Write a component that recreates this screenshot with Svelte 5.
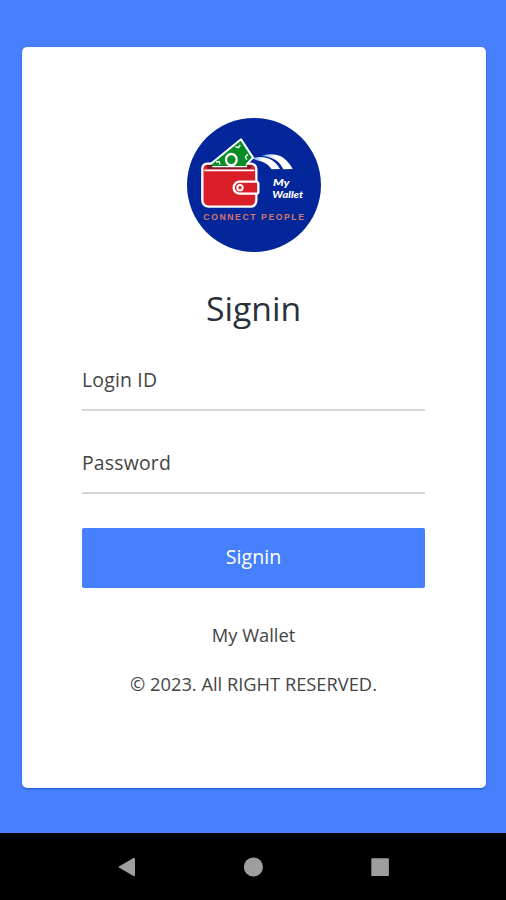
<script>
    let loginId = $state('');
    let password = $state('');

    const year = 2023;
</script>

<div class="screen">
    <main>
        <form class="card" onsubmit={(e) => e.preventDefault()}>
            <svg class="logo" viewBox="20 24 402 402" role="img" aria-label="My Wallet, connect people">
                <defs>
                    <linearGradient id="swoosh" x1="0" x2="1">
                        <stop offset="0" stop-color="#4f9fee" />
                        <stop offset="0.4" stop-color="#fff" />
                        <stop offset="1" stop-color="#fff" />
                    </linearGradient>
                </defs>
                <circle cx="221" cy="225" r="201" fill="#03279a" />

                <!-- swoosh -->
                <path d="M213 145 Q241 136 267 146 Q287 155 299 177 L274 178 Q262 159 238 153 Q226 149 213 145 Z" fill="url(#swoosh)" />
                <path d="M244 137 Q275 128 300 138 Q322 149 337 177 L309 178 Q298 153 275 145 Q260 139 244 137 Z" fill="url(#swoosh)" />

                <!-- wallet -->
                <path d="M80 161 H212 Q228 163 228 179 V272 Q226 290 209 290 H84 Q66 288 66 270 V174 Q68 162 80 161 Z" fill="#d91e28" stroke="#fff" stroke-width="7" stroke-linejoin="round" />
                <path d="M82 165 H209 Q215 170 209 176 H82 Q76 170 82 165 Z" fill="#711b26" />
                <path d="M72 181 H222" stroke="#fff" stroke-width="5" />

                <!-- banknote -->
                <path d="M90 163 L182 88 L218 143 L196 166" fill="#078b24" stroke="#fff" stroke-width="6" stroke-linejoin="round" />
                <path d="M92 163 H200 L194 168 H98 Z" fill="#078b24" />
                <path d="M107 156 L117 155 L119 163 M165 110 L174 113 L180 105 M203 133 L195 140 L199 149" fill="none" stroke="#fff" stroke-width="4" />
                <ellipse cx="153" cy="149" rx="16" ry="17" fill="#078b24" stroke="#fff" stroke-width="7" />
                <path d="M96 170 H200" stroke="#fff" stroke-width="4" />

                <!-- clasp -->
                <path d="M178 215 H227 Q234 215 234 222 V245 Q234 251 227 251 H178 A18 18 0 0 1 178 215 Z" fill="#d91e28" stroke="#fff" stroke-width="7" />
                <circle cx="179" cy="233" r="8" fill="#d91e28" stroke="#fff" stroke-width="6" />

                <text class="brand" x="278" y="228" textLength="50" lengthAdjust="spacingAndGlyphs">My</text>
                <text class="brand" x="276" y="265" textLength="92" lengthAdjust="spacingAndGlyphs">Wallet</text>
                <text class="slogan" x="69" y="329" textLength="302">CONNECT PEOPLE</text>
            </svg>

            <h1>Signin</h1>

            <input type="text" placeholder="Login ID" aria-label="Login ID" bind:value={loginId} />
            <input type="password" placeholder="Password" aria-label="Password" bind:value={password} />

            <button type="submit">Signin</button>

            <p class="app-name">My Wallet</p>
            <p class="copyright">© {year}. All RIGHT RESERVED.</p>
        </form>
    </main>

    <nav>
        <svg viewBox="0 0 20 20" aria-label="Back"><path d="M2 10 L17.5 1 Q19 .5 19 2 V18 Q19 19.5 17.5 19 Z" /></svg>
        <svg viewBox="0 0 20 20" aria-label="Home"><circle cx="10.4" cy="10" r="9.6" /></svg>
        <svg viewBox="0 0 20 20" aria-label="Recents"><rect x="1.3" y="1.3" width="17.6" height="17.6" rx="0.5" /></svg>
    </nav>
</div>

<style>
    :global(body) {
        margin: 0;
        background: #4680ff;
    }

    .screen {
        display: flex;
        flex-direction: column;
        height: 900px;
        font-family: "Open Sans", sans-serif;
        background: #4680ff;
        overflow: hidden;
    }

    main {
        flex: 1;
        padding: 47px 20px 45px 22px;
    }

    .card {
        display: flex;
        flex-direction: column;
        align-items: center;
        box-sizing: border-box;
        height: 741px;
        padding: 71px 61px 0 60px;
        background: #fff;
        border-radius: 5px;
        box-shadow: 0 1px 2px rgba(0, 70, 180, 0.7);
    }

    .logo {
        display: block;
        flex: none;
        width: 134px;
        height: 134px;
    }

    .brand {
        font-family: Lato, sans-serif;
        font-size: 29px;
        font-weight: 900;
        font-style: italic;
        fill: #fff;
    }

    .slogan {
        font-family: "Liberation Sans", sans-serif;
        font-size: 26px;
        font-weight: bold;
        fill: #d97568;
    }

    h1 {
        margin: 33px 0 0;
        font-size: 33.7px;
        font-weight: 400;
        line-height: 46px;
        color: #28313b;
    }

    input {
        box-sizing: border-box;
        width: 100%;
        height: 51px;
        margin: 0 0 32px;
        padding: 0 0 10px;
        font-family: inherit;
        font-size: 19.4px;
        letter-spacing: 0.2px;
        color: #333;
        background: none;
        border: 0;
        border-bottom: 2px solid #d6d6d6;
        border-radius: 0;
        outline: none;
    }

    h1 + input {
        margin-top: 29px;
    }

    input::placeholder {
        color: #444;
        opacity: 1;
    }

    button {
        width: 100%;
        height: 60px;
        margin: 2px 0 0;
        padding: 0 0 3px;
        font-family: inherit;
        font-size: 19.6px;
        color: #fff;
        background: #4680ff;
        border: 0;
        border-radius: 2px;
    }

    p {
        margin: 0;
        font-size: 18.3px;
        line-height: 26px;
        color: #444;
        white-space: nowrap;
    }

    .app-name {
        margin-top: 34px;
    }

    .copyright {
        margin-top: 23px;
    }

    nav {
        display: flex;
        flex: none;
        justify-content: center;
        gap: 107px;
        box-sizing: border-box;
        height: 67px;
        padding-top: 24px;
        background: #000;
    }

    nav svg {
        width: 20px;
        height: 20px;
        fill: #9e9e9e;
    }
</style>
